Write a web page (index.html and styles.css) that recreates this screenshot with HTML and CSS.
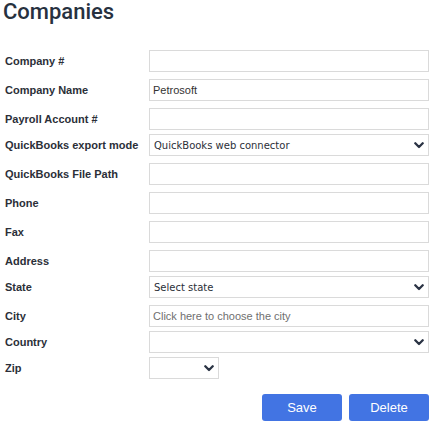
FILE: index.html
```html
<!DOCTYPE html>
<html>
<head>
<meta charset="utf-8">
<link rel="stylesheet" href="styles.css">
</head>
<body>
<div class="page">
  <h1 class="title">Companies</h1>
  <form class="form">
    <div class="row txt"><label class="lbl">Company #</label><div class="field"><input class="inp" type="text"></div></div>
    <div class="row txt"><label class="lbl">Company Name</label><div class="field"><input class="inp" type="text" value="Petrosoft"></div></div>
    <div class="row txt"><label class="lbl">Payroll Account #</label><div class="field"><input class="inp" type="text"></div></div>
    <div class="row"><label class="lbl">QuickBooks export mode</label><div class="field sel-wrap"><select class="sel"><option>QuickBooks web connector</option></select><svg class="chev" width="10" height="7" viewBox="0 0 10 7"><polyline points="1.3,1.3 5,5 8.7,1.3" fill="none" stroke="#2a3344" stroke-width="2.3" stroke-linecap="round" stroke-linejoin="round"/></svg></div></div>
    <div class="row txt"><label class="lbl">QuickBooks File Path</label><div class="field"><input class="inp" type="text"></div></div>
    <div class="row txt"><label class="lbl">Phone</label><div class="field"><input class="inp" type="text"></div></div>
    <div class="row txt"><label class="lbl">Fax</label><div class="field"><input class="inp" type="text"></div></div>
    <div class="row txt"><label class="lbl">Address</label><div class="field"><input class="inp" type="text"></div></div>
    <div class="row"><label class="lbl">State</label><div class="field sel-wrap"><select class="sel"><option>Select state</option></select><svg class="chev" width="10" height="7" viewBox="0 0 10 7"><polyline points="1.3,1.3 5,5 8.7,1.3" fill="none" stroke="#2a3344" stroke-width="2.3" stroke-linecap="round" stroke-linejoin="round"/></svg></div></div>
    <div class="row txt"><label class="lbl">City</label><div class="field"><input class="inp" type="text" placeholder="Click here to choose the city"></div></div>
    <div class="row"><label class="lbl">Country</label><div class="field sel-wrap"><select class="sel"><option></option></select><svg class="chev" width="10" height="7" viewBox="0 0 10 7"><polyline points="1.3,1.3 5,5 8.7,1.3" fill="none" stroke="#2a3344" stroke-width="2.3" stroke-linecap="round" stroke-linejoin="round"/></svg></div></div>
    <div class="row"><label class="lbl">Zip</label><div class="field sel-wrap zip"><select class="sel"><option></option></select><svg class="chev" width="10" height="7" viewBox="0 0 10 7"><polyline points="1.3,1.3 5,5 8.7,1.3" fill="none" stroke="#2a3344" stroke-width="2.3" stroke-linecap="round" stroke-linejoin="round"/></svg></div></div>
    <div class="actions">
      <button type="button" class="btn">Save</button>
      <button type="button" class="btn">Delete</button>
    </div>
  </form>
</div>
</body>
</html>
```
FILE: styles.css
```css
html, body {
  margin: 0;
  padding: 0;
  background: #fff;
}
body {
  font-family: "Liberation Sans", Arial, sans-serif;
  color: #2b2f38;
}
.page {
  width: 430px;
  padding: 0 1px 0 5px;
  box-sizing: border-box;
}
.title {
  margin: 0 0 0 -2px;
  padding-top: 0;
  font-family: Roboto, sans-serif;
  font-weight: 500;
  font-size: 22px;
  line-height: 24px;
  color: #27313f;
  height: 47px;
}
.form {
  display: flex;
  flex-direction: column;
  gap: 4px;
  margin: 0;
}
.row {
  display: flex;
  align-items: flex-end;
  height: 22px;
}
.row.txt {
  height: 25px;
}
.lbl {
  width: 144px;
  flex: none;
  font-size: 11px;
  font-weight: bold;
  line-height: 22px;
  color: #2b2f38;
}
.field {
  flex: 1;
  height: 22px;
  position: relative;
}
.inp {
  display: block;
  width: 100%;
  height: 22px;
  box-sizing: border-box;
  margin: 0;
  border: 1px solid #dadada;
  border-radius: 0;
  padding: 0 3px;
  font-family: "Liberation Sans", Arial, sans-serif;
  font-size: 11px;
  color: #333;
  background: #fff;
  outline: none;
}
.inp::placeholder {
  color: #6f6f6f;
  opacity: 1;
}
.sel {
  display: block;
  width: 100%;
  height: 22px;
  box-sizing: border-box;
  margin: 0;
  border: 1px solid #dadada;
  border-radius: 0;
  padding: 0 20px 0 4px;
  font-family: "DejaVu Sans", Verdana, sans-serif;
  font-size: 10px;
  color: #2b2f38;
  background: #fff;
  -webkit-appearance: none;
  appearance: none;
  outline: none;
}
.zip {
  flex: none;
  width: 70px;
}
.chev {
  position: absolute;
  right: 5px;
  top: 8px;
  pointer-events: none;
}
.actions {
  display: flex;
  justify-content: flex-end;
  gap: 7px;
  margin-top: 11px;
}
.btn {
  width: 80px;
  height: 27px;
  border: none;
  border-radius: 3px;
  background: #4274e3;
  color: #fff;
  font-family: "Liberation Sans", Arial, sans-serif;
  font-size: 13px;
  padding: 0;
}
```
